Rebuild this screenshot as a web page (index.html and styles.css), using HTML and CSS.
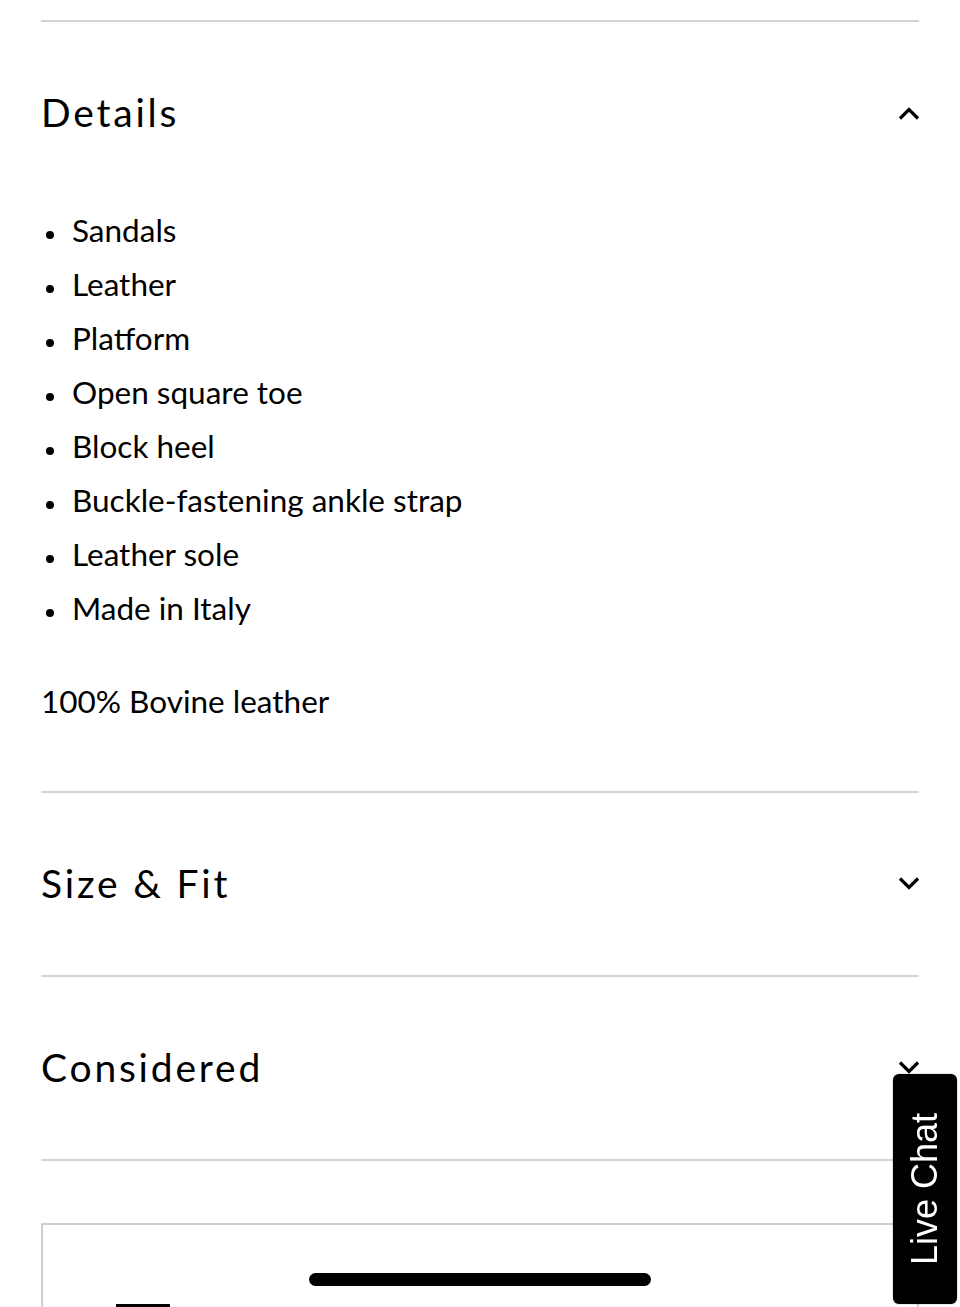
FILE: index.html
```html
<!DOCTYPE html>
<html lang="en">
<head>
<meta charset="utf-8">
<title>Product details</title>
<link rel="stylesheet" href="styles.css">
</head>
<body>
<main class="page">
  <section class="acc acc--open">
    <div class="acc__head">
      <h2 class="acc__title">Details</h2>
      <svg class="chev" width="22" height="14" viewBox="0 0 22 14"><path d="M2 12.5 L11 3.5 L20 12.5" fill="none" stroke="#000" stroke-width="3.2"/></svg>
    </div>
    <div class="acc__body">
      <ul class="bullets">
        <li>Sandals</li>
        <li>Leather</li>
        <li>Platform</li>
        <li>Open square toe</li>
        <li>Block heel</li>
        <li>Buckle-fastening ankle strap</li>
        <li>Leather sole</li>
        <li>Made in Italy</li>
      </ul>
      <p class="composition">100% Bovine leather</p>
    </div>
  </section>
  <section class="acc">
    <div class="acc__head">
      <h2 class="acc__title">Size &amp; Fit</h2>
      <svg class="chev" width="22" height="14" viewBox="0 0 22 14"><path d="M2 1.5 L11 10.5 L20 1.5" fill="none" stroke="#000" stroke-width="3.2"/></svg>
    </div>
  </section>
  <section class="acc">
    <div class="acc__head">
      <h2 class="acc__title">Considered</h2>
      <svg class="chev" width="22" height="14" viewBox="0 0 22 14"><path d="M2 1.5 L11 10.5 L20 1.5" fill="none" stroke="#000" stroke-width="3.2"/></svg>
    </div>
  </section>
  <div class="acc-end"></div>
  <div class="card">
    <div class="card__mark"></div>
  </div>
</main>
<button class="live-chat"><span>Live Chat</span></button>
<div class="home-indicator"></div>
</body>
</html>
```
FILE: styles.css
```css
html, body {
  margin: 0;
  padding: 0;
  background: #fff;
  color: #000;
  font-family: "Lato", "Liberation Sans", sans-serif;
  overflow: hidden;
}
.page {
  padding: 20px 41px 0;
  width: 878px;
}
.acc {
  border-top: 2px solid #d3d3d3;
}
.acc__head {
  height: 182px;
  display: flex;
  align-items: center;
  justify-content: space-between;
}
.acc__title {
  margin: 0;
  font-weight: 400;
  font-size: 39px;
  letter-spacing: 2.8px;
  line-height: 1;
  padding-bottom: 2px;
}
.chev {
  display: block;
  margin-right: -1px;
}
.acc__body {
  padding-bottom: 62px;
}
.bullets {
  margin: 0;
  padding: 0;
  list-style: none;
}
.bullets li {
  position: relative;
  padding-left: 31px;
  font-size: 31.5px;
  line-height: 52px;
  height: 54px;
}
.bullets li::before {
  content: "";
  position: absolute;
  left: 5px;
  top: 27px;
  width: 8px;
  height: 8px;
  border-radius: 50%;
  background: #000;
}
.composition {
  margin: 39px 0 0;
  font-size: 31.5px;
  line-height: 52px;
  height: 54px;
}
.acc-end {
  border-top: 2px solid #d3d3d3;
  height: 62px;
}
.card {
  border: 2px solid #cfcfcf;
  height: 300px;
  padding: 79px 0 0 73px;
  box-sizing: border-box;
}
.card__mark {
  width: 54px;
  height: 4px;
  background: #000;
}
.live-chat {
  position: fixed;
  top: 1074px;
  right: 3px;
  width: 64px;
  height: 230px;
  margin: 0;
  padding: 0;
  border: none;
  border-radius: 6px;
  background: #000;
  box-shadow: 0 0 2px rgba(0,0,0,0.35);
  display: flex;
  align-items: center;
  justify-content: center;
}
.live-chat span {
  display: block;
  transform: rotate(-90deg);
  white-space: nowrap;
  color: #fff;
  font-family: "Liberation Sans", Arial, sans-serif;
  font-size: 36px;
  line-height: 1;
}
.home-indicator {
  position: fixed;
  left: 309px;
  top: 1273px;
  width: 342px;
  height: 13px;
  border-radius: 7px;
  background: #000;
}
```
